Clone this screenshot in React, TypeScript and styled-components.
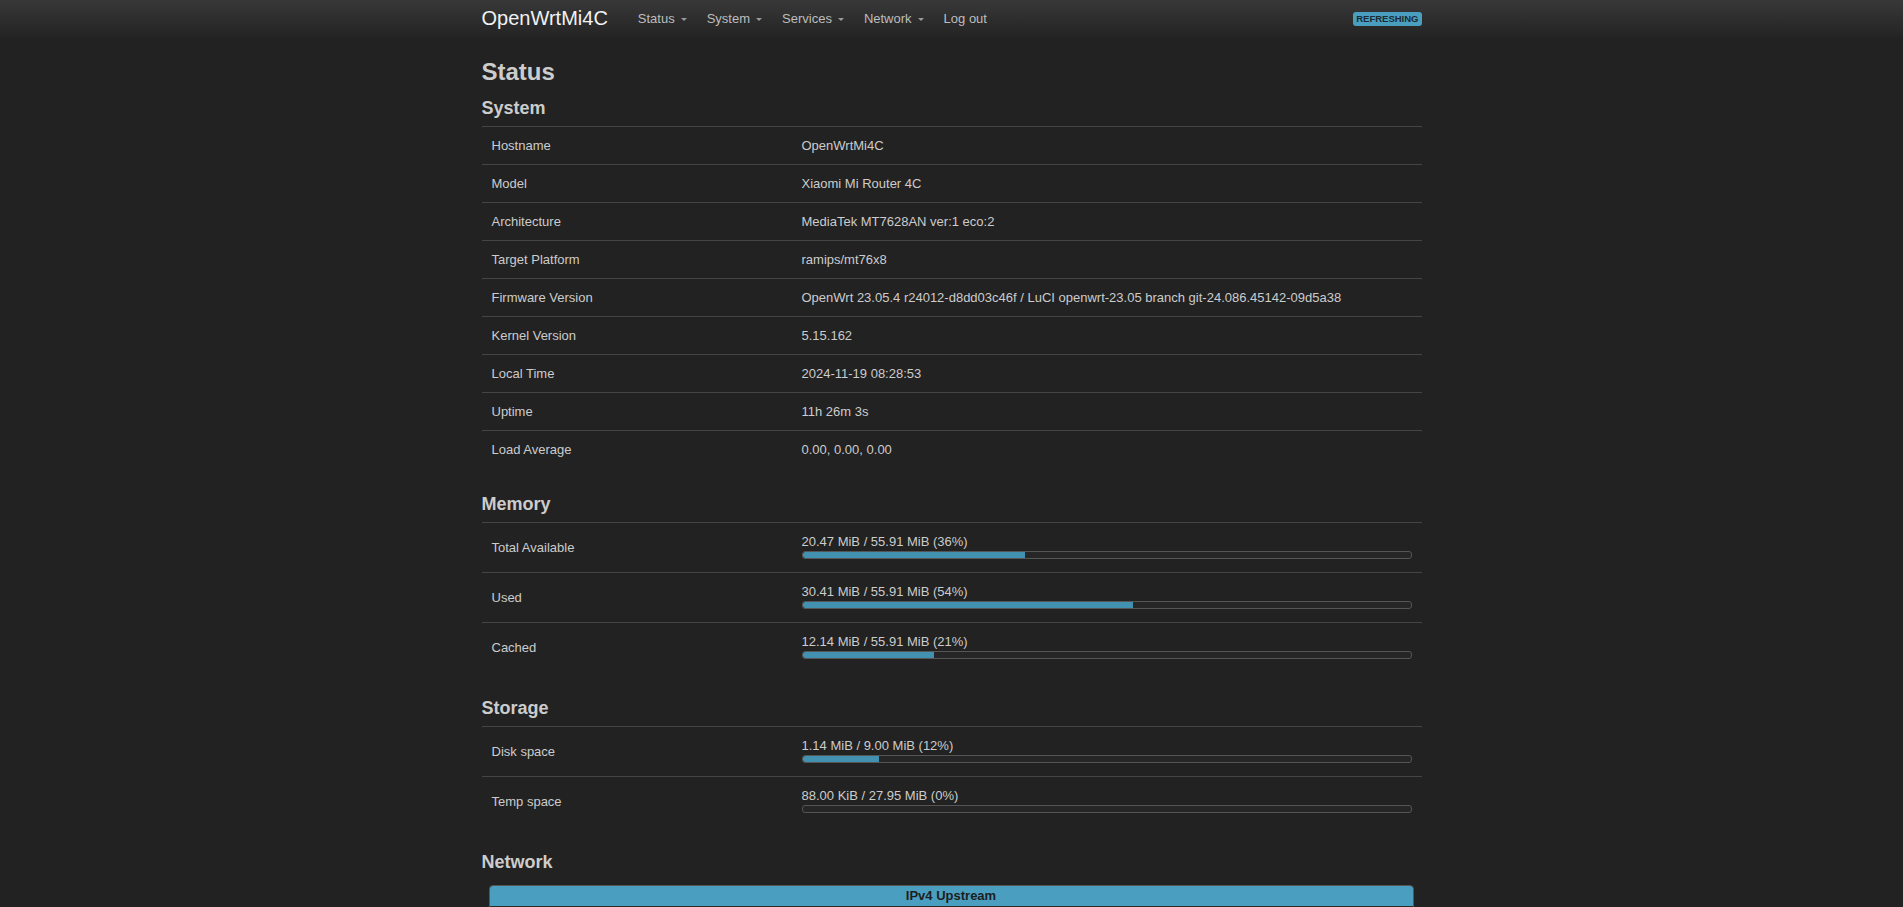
import React from "react";
import styled, { createGlobalStyle } from "styled-components";

const GlobalStyle = createGlobalStyle`
  html, body {
    margin: 0;
    padding: 0;
    background: #222;
  }
  body {
    font-family: "Liberation Sans", Arial, Helvetica, sans-serif;
    font-size: 13px;
    line-height: 17px;
    color: #ccc;
  }
  * { box-sizing: border-box; }
`;

const Header = styled.header`
  height: 40px;
  background: linear-gradient(to bottom, #383838 0%, #222 100%);
`;

const HeaderInner = styled.div`
  width: 940px;
  height: 40px;
  margin: 0 auto;
  display: flex;
  align-items: center;
`;

const Brand = styled.a`
  font-size: 20px;
  line-height: 24px;
  color: #f2f2f2;
  text-decoration: none;
  margin-right: 20px;
  position: relative;
  top: -2.5px;
`;

const Menu = styled.nav`
  display: flex;
  align-items: center;
  position: relative;
  top: -1.5px;
`;

const MenuItem = styled.a`
  display: flex;
  align-items: center;
  gap: 6px;
  padding: 0 10px;
  font-size: 13px;
  line-height: 17px;
  color: #bdbdbd;
  text-decoration: none;
`;

const Caret = styled.span`
  display: inline-block;
  width: 0;
  height: 0;
  border-left: 3px solid transparent;
  border-right: 3px solid transparent;
  border-top: 3.5px solid #9a9a9a;
  margin-top: 1px;
`;

const Spacer = styled.div`
  flex: 1;
`;

const Badge = styled.span`
  background: #4a9fc0;
  color: #1c2b32;
  font-size: 9.5px;
  font-weight: bold;
  line-height: 14px;
  height: 14px;
  padding: 0 3px;
  border-radius: 3px;
  position: relative;
  top: -1px;
`;

const Main = styled.main`
  width: 940px;
  margin: 0 auto;
  padding-top: 18.5px;
  padding-bottom: 60px;
`;

const PageTitle = styled.h2`
  font-size: 24px;
  line-height: 26px;
  font-weight: bold;
  color: #ccc;
  margin: 0 0 13px;
`;

const Section = styled.section`
  margin-bottom: 26px;
`;

const SectionTitle = styled.h3`
  font-size: 18px;
  line-height: 20px;
  font-weight: bold;
  color: #ccc;
  margin: 0 0 8px;
`;

const Row = styled.div`
  display: grid;
  grid-template-columns: 310px 1fr;
  align-items: center;
  border-top: 1px solid #444;
`;

const Cell = styled.div`
  padding: 10px;
  line-height: 17px;
  color: #ccc;
`;

const ProgressTrack = styled.div`
  height: 8px;
  margin: 1px 0 3px;
  border: 1px solid #555;
  border-radius: 3px;
  background: #262626;
  overflow: hidden;
`;

const ProgressFill = styled.div`
  height: 100%;
  background: #4391b0;
  border-radius: 2px 0 0 2px;
`;

const IfaceWrap = styled.div`
  padding: 5px 8px 0 7px;
`;

const IfaceBox = styled.div`
  border: 1px solid #555;
  border-radius: 4px;
  background: #2a2a2a;
  overflow: hidden;
`;

const IfaceHead = styled.div`
  background: #4a9fc0;
  color: #1e1e1e;
  font-weight: bold;
  text-align: center;
  line-height: 17px;
  padding: 1px 0 2px;
`;

const IfaceBody = styled.div`
  height: 80px;
`;

const systemRows: [string, string][] = [
  ["Hostname", "OpenWrtMi4C"],
  ["Model", "Xiaomi Mi Router 4C"],
  ["Architecture", "MediaTek MT7628AN ver:1 eco:2"],
  ["Target Platform", "ramips/mt76x8"],
  [
    "Firmware Version",
    "OpenWrt 23.05.4 r24012-d8dd03c46f / LuCI openwrt-23.05 branch git-24.086.45142-09d5a38",
  ],
  ["Kernel Version", "5.15.162"],
  ["Local Time", "2024-11-19 08:28:53"],
  ["Uptime", "11h 26m 3s"],
  ["Load Average", "0.00, 0.00, 0.00"],
];

const memoryRows: [string, string, number][] = [
  ["Total Available", "20.47 MiB / 55.91 MiB (36%)", 36.6],
  ["Used", "30.41 MiB / 55.91 MiB (54%)", 54.4],
  ["Cached", "12.14 MiB / 55.91 MiB (21%)", 21.7],
];

const storageRows: [string, string, number][] = [
  ["Disk space", "1.14 MiB / 9.00 MiB (12%)", 12.6],
  ["Temp space", "88.00 KiB / 27.95 MiB (0%)", 0],
];

const menu = ["Status", "System", "Services", "Network"];

function BarRow({ label, text, pct }: { label: string; text: string; pct: number }) {
  return (
    <Row>
      <Cell>{label}</Cell>
      <Cell>
        <div>{text}</div>
        <ProgressTrack>
          <ProgressFill style={{ width: `${pct}%` }} />
        </ProgressTrack>
      </Cell>
    </Row>
  );
}

export default function App() {
  return (
    <>
      <GlobalStyle />
      <Header>
        <HeaderInner>
          <Brand href="#">OpenWrtMi4C</Brand>
          <Menu>
            {menu.map((m) => (
              <MenuItem key={m} href="#">
                {m}
                <Caret />
              </MenuItem>
            ))}
            <MenuItem href="#">Log out</MenuItem>
          </Menu>
          <Spacer />
          <Badge>REFRESHING</Badge>
        </HeaderInner>
      </Header>
      <Main>
        <PageTitle>Status</PageTitle>
        <Section>
          <SectionTitle>System</SectionTitle>
          {systemRows.map(([k, v]) => (
            <Row key={k}>
              <Cell>{k}</Cell>
              <Cell>{v}</Cell>
            </Row>
          ))}
        </Section>
        <Section>
          <SectionTitle>Memory</SectionTitle>
          {memoryRows.map(([k, t, p]) => (
            <BarRow key={k} label={k} text={t} pct={p} />
          ))}
        </Section>
        <Section>
          <SectionTitle>Storage</SectionTitle>
          {storageRows.map(([k, t, p]) => (
            <BarRow key={k} label={k} text={t} pct={p} />
          ))}
        </Section>
        <Section>
          <SectionTitle>Network</SectionTitle>
          <IfaceWrap>
            <IfaceBox>
              <IfaceHead>IPv4 Upstream</IfaceHead>
              <IfaceBody />
            </IfaceBox>
          </IfaceWrap>
        </Section>
      </Main>
    </>
  );
}
